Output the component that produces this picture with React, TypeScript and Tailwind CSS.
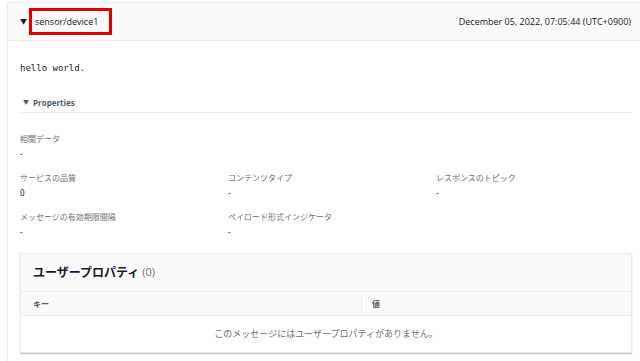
import React from 'react';

interface Field {
  label: string;
  value: string;
}

const rows: Field[][] = [
  [{ label: '相関データ', value: '-' }],
  [
    { label: 'サービスの品質', value: '0' },
    { label: 'コンテンツタイプ', value: '-' },
    { label: 'レスポンスのトピック', value: '-' },
  ],
  [
    { label: 'メッセージの有効期限間隔', value: '-' },
    { label: 'ペイロード形式インジケータ', value: '-' },
  ],
];

const font = { fontFamily: '"Open Sans", "Noto Sans CJK JP", sans-serif' };

export default function App() {
  return (
    <div className="w-[640px] h-[361px] bg-white overflow-hidden pt-[2px] pl-[7px]" style={font}>
      <div className="border-l border-t border-[#eaeded] h-full">
        {/* Header */}
        <div className="h-[38px] bg-[#fafafa] border-b border-[#eaeded] flex items-center justify-between pl-[12px] pr-[9px]">
          <div className="flex items-center">
            <span className="text-[7px] text-[#16191f] mr-[2px] leading-none">▼</span>
            <div className="border-[3px] border-[#e00000] h-[27px] w-[83px] flex items-center pl-[3px]">
              <span className="text-[9px] text-[#16191f]">sensor/device1</span>
            </div>
          </div>
          <span className="text-[9px] text-[#16191f]">December 05, 2022, 07:05:44 (UTC+0900)</span>
        </div>

        {/* Body */}
        <div className="pl-[12px] pr-[8px]">
          <div className="h-[52px] flex items-center pt-[3px]">
            <span className="text-[9px] text-[#16191f]" style={{ fontFamily: '"DejaVu Sans Mono", monospace' }}>
              hello world.
            </span>
          </div>

          <div className="border-b border-[#eaeded] h-[20px] flex items-center pl-[3px]">
            <span className="text-[6px] text-[#545b64] mr-[4px]">▼</span>
            <span className="text-[8px] font-bold text-[#545b64]">Properties</span>
          </div>

          <div className="pt-[19px] flex flex-col gap-[9px]">
            {rows.map((row, i) => (
              <div key={i} className="grid grid-cols-[208px_208px_1fr]">
                {row.map((f) => (
                  <div key={f.label} className="flex flex-col">
                    <span className="text-[8px] text-[#687078] leading-[14px]">{f.label}</span>
                    <span className="text-[8px] text-[#16191f] leading-[16px]" style={{ fontFamily: '"Noto Sans", sans-serif' }}>
                      {f.value}
                    </span>
                  </div>
                ))}
              </div>
            ))}
          </div>

          {/* User properties */}
          <div className="mt-[13px] w-[612px] border border-[#eaeded] shadow-[0_1px_1px_rgba(0,28,36,0.25)]">
            <div className="h-[38px] bg-[#fafafa] border-b border-[#eaeded] flex items-center pl-[12px]">
              <span className="text-[12px] font-bold text-[#16191f]">ユーザープロパティ</span>
              <span className="text-[11px] text-[#687078] ml-[3px]">(0)</span>
            </div>
            <div className="h-[24px] bg-[#fafafa] border-b border-[#eaeded] grid grid-cols-[341px_1fr] items-center">
              <div className="pl-[12px] border-r border-[#eaeded] h-[14px] flex items-center">
                <span className="text-[8px] font-bold text-[#545b64]">キー</span>
              </div>
              <div className="pl-[10px] flex items-center">
                <span className="text-[8px] font-bold text-[#545b64]">値</span>
              </div>
            </div>
            <div className="h-[36px] flex items-center justify-center">
              <span className="text-[9px] text-[#687078]">このメッセージにはユーザープロパティがありません。</span>
            </div>
          </div>
        </div>
      </div>
    </div>
  );
}
